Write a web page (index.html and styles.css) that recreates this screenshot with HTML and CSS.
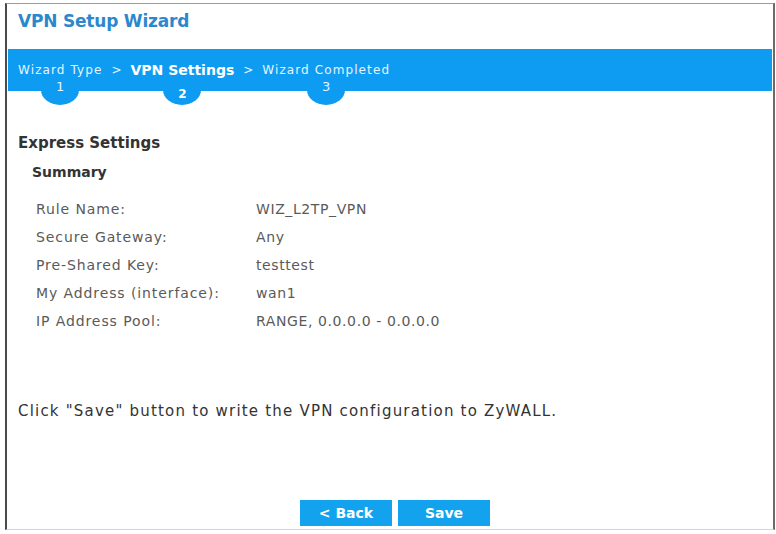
FILE: index.html
```html
<!DOCTYPE html>
<html lang="en">
<head>
    <meta charset="UTF-8">
    <title>VPN Setup Wizard</title>
    <link rel="stylesheet" href="styles.css">
</head>
<body>
    <div class="wizard">
        <div class="wizard-title">VPN Setup Wizard</div>

        <!-- Steps -->
        <div class="steps">
            <div class="step">
                <span class="step-label">Wizard Type</span>
                <span class="step-num">1</span>
            </div>
            <span class="step-sep">&gt;</span>
            <div class="step active">
                <span class="step-label">VPN Settings</span>
                <span class="step-num">2</span>
            </div>
            <span class="step-sep">&gt;</span>
            <div class="step">
                <span class="step-label">Wizard Completed</span>
                <span class="step-num">3</span>
            </div>
        </div>

        <div class="content">
            <div class="section-title">Express Settings</div>
            <div class="sub-title">Summary</div>

            <div class="summary">
                <div class="row"><span class="label">Rule Name:</span><span class="value">WIZ_L2TP_VPN</span></div>
                <div class="row"><span class="label">Secure Gateway:</span><span class="value">Any</span></div>
                <div class="row"><span class="label">Pre-Shared Key:</span><span class="value">testtest</span></div>
                <div class="row"><span class="label">My Address (interface):</span><span class="value">wan1</span></div>
                <div class="row"><span class="label">IP Address Pool:</span><span class="value">RANGE, 0.0.0.0 - 0.0.0.0</span></div>
            </div>

            <p class="note">Click "Save" button to write the VPN configuration to ZyWALL.</p>
        </div>

        <div class="actions">
            <button class="btn">&lt; Back</button>
            <button class="btn">Save</button>
        </div>
    </div>
</body>
</html>
```

FILE: styles.css
```css
/* Global */
body {
    margin: 0;
    background-color: #ffffff;
    font-family: 'DejaVu Sans', Verdana, sans-serif;
    color: #444;
}

/* Frame */
.wizard {
    margin: 3px 1px 2px 5px;
    height: 527px;
    box-sizing: border-box;
    border-left: 2px solid #4a4a4a;
    border-right: 2px solid #6a6a6a;
    border-top: 1px solid #9a9a9a;
    border-bottom: 1px solid #d4d4d4;
    display: flex;
    flex-direction: column;
}

.wizard-title {
    padding: 7px 0 0 11px;
    height: 39px;
    box-sizing: border-box;
    font-size: 17px;
    font-weight: bold;
    letter-spacing: -0.2px;
    color: #2b88cc;
}

/* Step bar */
.steps {
    margin: 6px 1px 0 1px;
    height: 42px;
    background-color: #0e9bf2;
    display: flex;
    align-items: flex-start;
    padding-left: 10px;
    color: #ffffff;
}

.step {
    display: flex;
    flex-direction: column;
    align-items: center;
    padding-top: 13px;
}

.step-label {
    font-size: 12px;
    line-height: 16px;
    letter-spacing: 1.1px;
    color: #e6f4ff;
}

.step.active .step-label {
    font-size: 14px;
    letter-spacing: 0;
    font-weight: bold;
    color: #ffffff;
}

.step-num {
    width: 38px;
    height: 27px;
    box-sizing: border-box;
    padding-top: 1px;
    text-align: center;
    font-size: 13px;
    line-height: 16px;
    background-color: #0e9bf2;
    border-radius: 0 0 19px 19px / 0 0 15px 15px;
    color: #e6f4ff;
}

.step.active .step-num {
    padding-top: 8px;
    font-size: 12px;
    font-weight: bold;
    color: #ffffff;
}

.step-sep {
    padding: 13px 9px 0 9px;
    font-size: 12px;
    line-height: 16px;
    color: #e6f4ff;
}

/* Content */
.content {
    padding: 43px 0 0 11px;
    flex-grow: 1;
}

.section-title {
    font-size: 15px;
    font-weight: bold;
    color: #333;
    line-height: 18px;
}

.sub-title {
    margin: 11px 0 0 14px;
    font-size: 14px;
    font-weight: bold;
    color: #333;
    line-height: 18px;
}

.summary {
    margin: 14px 0 0 18px;
}

.row {
    display: flex;
    height: 28px;
    align-items: center;
    font-size: 14px;
    letter-spacing: 0.9px;
    color: #5a5a5a;
}

.row .label {
    width: 220px;
}

.row .value {
    letter-spacing: 0.6px;
}

.note {
    margin: 67px 0 0 0;
    font-size: 15px;
    letter-spacing: 1.2px;
    color: #333;
}

/* Buttons */
.actions {
    display: flex;
    justify-content: center;
    gap: 6px;
    padding: 0 0 3px 10px;
}

.btn {
    width: 92px;
    height: 26px;
    border: none;
    background-color: #12a2ee;
    color: #ffffff;
    font-family: inherit;
    font-size: 14px;
    font-weight: bold;
}
```
